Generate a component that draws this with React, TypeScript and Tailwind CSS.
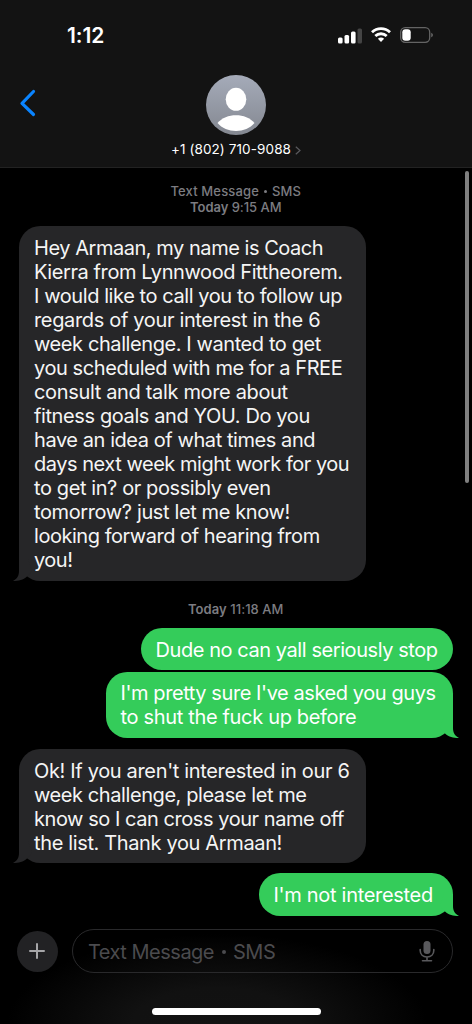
import clsx from 'clsx'

type Line = { text: string; spacing: string }

type Message = {
  id: number
  from: 'them' | 'me'
  tail: boolean
  lines: Line[]
  className: string
}

const firstThread: Message[] = [
  {
    id: 1,
    from: 'them',
    tail: true,
    className: 'mt-[11px] h-[354.5px] w-[347px] pt-[9.5px]',
    lines: [
      { text: 'Hey Armaan, my name is Coach', spacing: 'tracking-[-0.46px]' },
      { text: 'Kierra from Lynnwood Fittheorem.', spacing: 'tracking-[-0.41px]' },
      { text: 'I would like to call you to follow up', spacing: 'tracking-[-0.42px]' },
      { text: 'regards of your interest in the 6', spacing: 'tracking-[-0.34px]' },
      { text: 'week challenge. I wanted to get', spacing: 'tracking-[-0.41px]' },
      { text: 'you scheduled with me for a FREE', spacing: 'tracking-[-0.42px]' },
      { text: 'consult and talk more about', spacing: 'tracking-[-0.34px]' },
      { text: 'fitness goals and YOU. Do you', spacing: 'tracking-[-0.39px]' },
      { text: 'have an idea of what times and', spacing: 'tracking-[-0.43px]' },
      { text: 'days next week might work for you', spacing: 'tracking-[-0.47px]' },
      { text: 'to get in? or possibly even', spacing: 'tracking-[-0.4px]' },
      { text: 'tomorrow? just let me know!', spacing: 'tracking-[-0.38px]' },
      { text: 'looking forward of hearing from', spacing: 'tracking-[-0.46px]' },
      { text: 'you!', spacing: 'tracking-[-0.5px]' },
    ],
  },
]

const secondThread: Message[] = [
  {
    id: 2,
    from: 'me',
    tail: false,
    className: 'mt-[11px] h-[42.5px] w-[312px] pt-[10px]',
    lines: [{ text: 'Dude no can yall seriously stop', spacing: 'tracking-[-0.43px]' }],
  },
  {
    id: 3,
    from: 'me',
    tail: true,
    className: 'mt-[1.5px] h-[66px] w-[347px] pt-[9px]',
    lines: [
      { text: "I'm pretty sure I've asked you guys", spacing: 'tracking-[-0.42px]' },
      { text: 'to shut the fuck up before', spacing: 'tracking-[-0.33px]' },
    ],
  },
  {
    id: 4,
    from: 'them',
    tail: true,
    className: 'mt-[11px] h-[114px] w-[347px] pt-[10px]',
    lines: [
      { text: "Ok! If you aren't interested in our 6", spacing: 'tracking-[-0.34px]' },
      { text: 'week challenge, please let me', spacing: 'tracking-[-0.42px]' },
      { text: 'know so I can cross your name off', spacing: 'tracking-[-0.45px]' },
      { text: 'the list. Thank you Armaan!', spacing: 'tracking-[-0.36px]' },
    ],
  },
  {
    id: 5,
    from: 'me',
    tail: true,
    className: 'mt-[10.5px] h-[42.5px] w-[194px] pt-[10px]',
    lines: [{ text: "I'm not interested", spacing: 'tracking-[-0.3px]' }],
  },
]

function Tail({ mine }: { mine: boolean }) {
  return (
    <svg
      viewBox="0 0 27 22"
      className={clsx(
        'absolute bottom-0 h-[22px] w-[27px]',
        mine ? '-right-[6px] text-[#34cc5a]' : '-left-[6px] -scale-x-100 text-[#262628]',
      )}
    >
      <path
        d="M21 0V12C21 16.500 22.500 19.500 27 22C21 22 17 21 13 17.500L8 12L12 0Z"
        fill="currentColor"
      />
    </svg>
  )
}

function Bubble({ message }: { message: Message }) {
  const mine = message.from === 'me'
  return (
    <div
      className={clsx(
        'relative rounded-[21.25px] px-[15px] text-[20px] leading-[24px] whitespace-nowrap',
        message.className,
        mine ? 'self-end bg-[#34cc5a] text-white' : 'self-start bg-[#262628] text-[#f5f5f5]',
      )}
    >
      {message.tail && <Tail mine={mine} />}
      {message.lines.map((line) => (
        <p key={line.text} className={clsx('relative', line.spacing)}>
          {line.text}
        </p>
      ))}
    </div>
  )
}

export default function App() {
  return (
    <div className="flex h-[1024px] w-[472px] flex-col overflow-hidden bg-black font-['Inter',sans-serif] text-white">
      <header className="flex h-[168px] shrink-0 flex-col border-b border-[#222222] bg-[#131313]">
        <div className="flex h-[70px] items-center pt-px">
          <span className="ml-[67px] text-[21px] font-semibold tracking-[-0.1px]">1:12</span>
          <svg className="ml-auto h-[20px] w-[24px]" viewBox="0 0 24 20" fill="#fff">
            <rect x="0" y="11.5" width="4.6" height="6" rx="1.5" />
            <rect x="6.5" y="9" width="4.6" height="8.5" rx="1.5" />
            <rect x="13" y="5.5" width="4.6" height="12" rx="1.5" />
            <rect x="19.5" y="2.5" width="4.5" height="15" rx="1.5" fill="#444" />
          </svg>
          <svg className="mt-[-1px] ml-[9px] h-[16px] w-[20px]" viewBox="0 0 20 16" fill="none" stroke="#fff" strokeWidth="2.8">
            <path d="M1 5.3C6 .5 14 .5 19 5.3" />
            <path d="M4.300 9C7.500 6 12.500 6 15.700 9" />
            <path d="M6.900 11.700C8.700 10 11.300 10 13.100 11.700L10 15Z" fill="#fff" stroke="none" />
          </svg>
          <svg className="mt-[-1px] mr-[39px] ml-[9px] h-[16px] w-[33px]" viewBox="0 0 33 16">
            <rect x=".7" y=".7" width="29" height="14.6" rx="4.5" fill="none" stroke="#646464" strokeWidth="1.3" />
            <rect x="2.3" y="2.3" width="8.4" height="11.4" rx="3" fill="#fff" />
            <path d="M31.300 5.700C33.300 6.500 33.300 9.500 31.300 10.300Z" fill="#707070" />
          </svg>
        </div>

        <div className="grid grid-cols-3">
          <svg className="mt-[19px] ml-[19px] h-[28px] w-[18px]" viewBox="0 0 18 28" fill="none">
            <path d="M14.500 2.500L3 14.300L14.500 25.500" stroke="#0a84ff" strokeWidth="3.2" strokeLinecap="round" strokeLinejoin="round" />
          </svg>
          <div className="flex flex-col items-center">
            <svg className="mt-[5px] h-[60px] w-[60px]" viewBox="0 0 60 60">
              <defs>
                <linearGradient id="avatar" x1="0" y1="0" x2="0" y2="1">
                  <stop offset="0" stopColor="#a5abb9" />
                  <stop offset="1" stopColor="#848891" />
                </linearGradient>
              </defs>
              <circle cx="30" cy="30" r="30" fill="url(#avatar)" />
              <ellipse cx="30" cy="24.3" rx="10.3" ry="11.5" fill="#fff" />
              <path d="M11.500 48C20 37.500 40 37.500 48.500 48C40 58.500 20 58.500 11.500 48Z" fill="#fff" />
            </svg>
            <div className="mt-[6px] flex items-center gap-[4px] whitespace-nowrap">
              <span className="text-[13.5px] leading-[17px] tracking-[0.1px]">+1 (802) 710-9088</span>
              <svg className="mt-px h-[9px] w-[6px]" viewBox="0 0 6 9" fill="none" stroke="#5a5a5e" strokeWidth="1.2">
                <path d="M.8.7L5 4.500L.8 8.300" />
              </svg>
            </div>
          </div>
        </div>
      </header>

      <main className="relative flex h-[761px] shrink-0 flex-col pr-[19.5px] pl-[19px]">
        <div className="mt-[15px] flex flex-col items-center text-[13px] leading-[16px] font-medium text-[#7c7c81]">
          <span className="flex items-center tracking-[0.15px]">
            Text Message
            <i className="mx-[5px] h-[3px] w-[3px] rounded-full bg-[#7c7c81]" />
            SMS
          </span>
          <span className="tracking-[-0.05px]">
            <b className="font-semibold">Today</b> 9:15 AM
          </span>
        </div>
        {firstThread.map((message) => (
          <Bubble key={message.id} message={message} />
        ))}
        <div className="mt-[20px] flex justify-center text-[13px] leading-[16px] font-medium text-[#7c7c81]">
          <span className="tracking-[0.05px]">
            <b className="font-semibold">Today</b> 11:18 AM
          </span>
        </div>
        {secondThread.map((message) => (
          <Bubble key={message.id} message={message} />
        ))}
        <div className="absolute top-[3px] right-[3px] h-[312px] w-[4px] rounded-full bg-[#808080]" />
      </main>

      <footer className="flex h-[95px] shrink-0 flex-col bg-[radial-gradient(ellipse_210px_90px_at_46%_100%,#121212_0%,#111111_40%,#000000_100%)]">
        <div className="flex h-[44px] items-center">
          <div className="ml-[17px] flex h-[41px] w-[41px] items-center justify-center rounded-full bg-[#222224]">
            <svg className="mr-px h-[16px] w-[16px]" viewBox="0 0 16 16" stroke="#a6a6a8" strokeWidth="2" strokeLinecap="round">
              <path d="M8 1V15M1 8H15" />
            </svg>
          </div>
          <div className="ml-[14px] flex h-[44px] w-[381px] items-center rounded-full border border-[#29292b] pr-[17px] pl-[15px]">
            <span className="mt-px flex items-center text-[20px] leading-[24px] tracking-[-0.5px] text-[#4b4b4e]">
              Text Message
              <i className="mr-[7px] ml-[8px] h-[4px] w-[4px] rounded-full bg-[#4b4b4e]" />
              SMS
            </span>
            <svg className="ml-auto h-[22px] w-[16px]" viewBox="0 0 16 22" fill="none" stroke="#59595c" strokeWidth="1.6" strokeLinecap="round">
              <rect x="4.5" y="1" width="7" height="13" rx="3.5" fill="#59595c" stroke="none" />
              <path d="M1.200 9.500V10.500C1.200 14.500 4 17 8 17C12 17 14.800 14.500 14.800 10.500V9.500M8 17V20.700M3.500 20.700H12.500" />
            </svg>
          </div>
        </div>
        <div className="mt-[35px] ml-[152px] h-[7px] w-[169px] rounded-full bg-white" />
      </footer>
    </div>
  )
}
